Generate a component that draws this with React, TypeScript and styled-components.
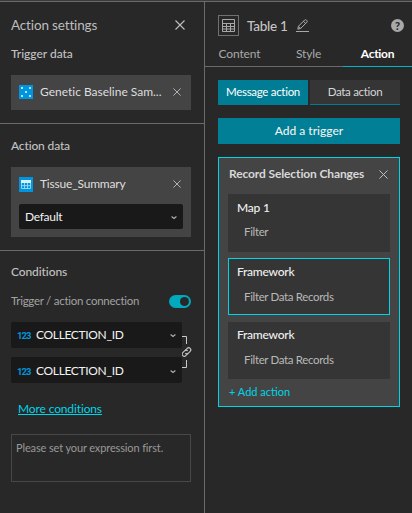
import React from "react";
import styled, { createGlobalStyle, css } from "styled-components";

const Global = createGlobalStyle`
  * { box-sizing: border-box; }
  body { margin: 0; background: #282828; font-family: Lato, "Open Sans", sans-serif; overflow: hidden; }
  svg { display: block; flex: none; }
`;

const Screen = styled.div`
  width: 412px;
  height: 513px;
  display: grid;
  grid-template-columns: 205px 207px;
  background: #282828;
  border-top: 1px solid #3c3c3c;
`;

const Panel = styled.section<{ $divided?: boolean }>`
  border-top: 1px solid #6a6a6a;
  border-right: ${(p) => (p.$divided ? "1px solid #6a6a6a" : "none")};
  min-width: 0;
`;

const Text = styled.span<{ $size?: number; $color?: string; $weight?: number; $track?: number }>`
  font-size: ${(p) => p.$size ?? 12}px;
  line-height: 18px;
  color: ${(p) => p.$color ?? "#dedede"};
  font-weight: ${(p) => p.$weight ?? 400};
  letter-spacing: ${(p) => p.$track ?? 0}px;
  white-space: nowrap;
`;

const Section = styled.div<{ $height: number; $top: number }>`
  height: ${(p) => p.$height}px;
  padding: ${(p) => p.$top}px 13px 0 11px;
  border-bottom: 1px solid #6a6a6a;
  display: flex;
  flex-direction: column;
`;

const LastSection = styled(Section)`
  border-bottom: none;
`;

const Row = styled.div`
  display: flex;
  align-items: center;
  justify-content: space-between;
`;

const TitleRow = styled(Row)`
  height: 18px;
  margin-bottom: 11px;
  padding-right: 6px;
`;

const DataCard = styled.div<{ $height: number }>`
  height: ${(p) => p.$height}px;
  margin-top: 12px;
  padding: 8px 8px 0;
  background: #444;
`;

const DataRow = styled.div`
  display: flex;
  align-items: center;
  height: 18px;
  padding-right: 2px;
  & > span { flex: 1; margin-left: 7px; }
`;

const Select = styled.div<{ $height?: number; $drop?: number }>`
  height: ${(p) => p.$height ?? 26}px;
  background: #191919;
  border-radius: 2px;
  display: flex;
  align-items: center;
  padding: ${(p) => p.$drop ?? 0}px 5px 0 6px;
  & > span:last-of-type { flex: 1; }
`;

const DataSelect = styled(Select)`
  margin-top: 11px;
`;

const NumberTag = styled.span`
  width: 19px;
  font: 700 9.5px Roboto, "Open Sans", sans-serif;
  letter-spacing: -1px;
  color: #0095dd;
`;

const Toggle = styled.div`
  width: 22px;
  height: 13px;
  border-radius: 7px;
  background: #00a9bd;
  display: flex;
  align-items: center;
  justify-content: flex-end;
  padding-right: 2px;
  &::after {
    content: "";
    width: 9px;
    height: 9px;
    border-radius: 50%;
    background: #282828;
  }
`;

const ConnectionRow = styled(Row)`
  margin-top: 11px;
  height: 18px;
`;

const Fields = styled.div`
  display: grid;
  grid-template-columns: 171px 9px;
  margin-top: 12px;
`;

const FieldStack = styled.div`
  display: flex;
  flex-direction: column;
  gap: 9px;
`;

const More = styled.a`
  align-self: flex-start;
  margin: 17px 0 0 7px;
  height: 15px;
  font-size: 12px;
  line-height: 18px;
  letter-spacing: -0.13px;
  color: #00d5e7;
  border-bottom: 1px solid #00d5e7;
`;

const Expression = styled.div`
  margin-top: 19px;
  height: 48px;
  border: 1px solid #484848;
  padding: 2px 4px;
  line-height: 18px;
`;

const WidgetHeader = styled.header`
  height: 42px;
  display: flex;
  align-items: center;
  padding: 5px 8px 0 13px;
`;

const WidgetIcon = styled.div`
  width: 21px;
  height: 21px;
  border: 1px solid #707070;
  display: grid;
  place-items: center;
  margin-right: 8px;
`;

const Edit = styled.div`
  margin-left: 8px;
  width: 13px;
  height: 13px;
  border-bottom: 1px solid #a8a8a8;
`;

const Help = styled.div`
  margin-left: auto;
  width: 13px;
  height: 13px;
  border-radius: 50%;
  background: #a9a9a9;
  color: #282828;
  font-size: 11px;
  font-weight: 900;
  line-height: 13px;
  text-align: center;
`;

const Tabs = styled.nav`
  display: grid;
  grid-template-columns: repeat(3, 1fr);
`;

const Tab = styled.div<{ $active?: boolean }>`
  height: 23px;
  line-height: 20px;
  text-align: center;
  font-size: 12px;
  letter-spacing: ${(p) => (p.$active ? "-0.3px" : "-0.15px")};
  color: ${(p) => (p.$active ? "#fff" : "#a8a8a8")};
  font-weight: ${(p) => (p.$active ? 700 : 400)};
  border-bottom: 1px solid ${(p) => (p.$active ? "#00b4c8" : "#6a6a6a")};
`;

const Body = styled.div`
  padding: 13px 12px 0 13px;
`;

const Switcher = styled.div`
  display: grid;
  grid-template-columns: 1fr 1fr;
  gap: 2px;
`;

const Segment = styled.div<{ $active?: boolean }>`
  height: 25px;
  line-height: 23px;
  text-align: center;
  font-size: 11.5px;
  white-space: nowrap;
  border-bottom: 1px solid #007d94;
  ${(p) =>
    p.$active
      ? css`background: #007d94; color: #fff; letter-spacing: -0.3px;`
      : css`background: #353535; color: #d5d5d5; letter-spacing: -0.3px;`}
`;

const TriggerButton = styled.div`
  margin-top: 13px;
  height: 26px;
  line-height: 26px;
  text-align: center;
  background: #007f96;
  color: #f0f0f0;
  font-size: 12px;
  font-weight: 500;
  letter-spacing: 0;
`;

const TriggerCard = styled.div`
  margin-top: 13px;
  height: 250px;
  border: 1px solid #00d5e7;
  background: #444;
  padding: 7px 9px 0;
`;

const CardHeader = styled(Row)`
  height: 18px;
  padding: 0 2px 0 1px;
  margin-bottom: 11px;
`;

const ActionItem = styled.div<{ $selected?: boolean; $first?: boolean; $top?: number; $gap?: number }>`
  height: ${(p) => (p.$first ? 58 : 57)}px;
  margin-bottom: ${(p) => (p.$first ? 6 : 7)}px;
  background: #353535;
  border: 1px solid ${(p) => (p.$selected ? "#00d5e7" : "#353535")};
  padding: ${(p) => p.$top ?? 4}px 8px 0;
  display: flex;
  flex-direction: column;
  & > span + span { margin: ${(p) => p.$gap ?? 6}px 0 0 7px; }
`;

const AddAction = styled.div`
  margin: -6px 0 0 1px;
`;

const Close = ({ size = 8, color = "#c0c0c0" }: { size?: number; color?: string }) => (
  <svg width={size} height={size} viewBox="0 0 10 10" fill="none" stroke={color} strokeWidth="1.1">
    <path d="M.5.5l9 9M9.5.5l-9 9" />
  </svg>
);

const Chevron = () => (
  <svg width="8" height="6" viewBox="0 0 8 6" fill="none" stroke="#b0b0b0" strokeWidth="1.1">
    <path d="M1.6 2.5L4 4.5l2.4-2" />
  </svg>
);

const PointsIcon = () => (
  <svg width="14" height="14" viewBox="0 0 14 14">
    <path fill="#0096df" d="M0 0h14v14H0z" />
    <path fill="#b9e4f8" d="M2 2h2v2H2zM10 2h2v2h-2zM6 6h2v2H6zM2 10h2v2H2zM10 10h2v2h-2z" />
  </svg>
);

const LayerTableIcon = () => (
  <svg width="14" height="15" viewBox="0 0 14 15">
    <path fill="#0096df" d="M0 0h14v15H0z" />
    <path fill="#d9f1fc" d="M2 3h10v3H2z" />
    <path fill="none" stroke="#b4e0f6" strokeWidth=".8" d="M2.5 6v5.5h9V6M5.5 6v5.5M8.5 6v5.5M2.5 8.7h9" />
  </svg>
);

const TableIcon = () => (
  <svg width="13" height="13" viewBox="0 0 13 13" fill="none" stroke="#a8a8a8">
    <path d="M.5.5h12v12H.5zM0 4.5h13" />
    <path d="M0 7.5h13M0 10h13M4.5 4.5v8M8.5 4.5v8" />
  </svg>
);

const Pencil = () => (
  <svg width="13" height="12" viewBox="0 0 13 12" fill="none" stroke="#b0b0b0" strokeLinejoin="round">
    <path d="M1.8 10.2l.7-3L8.7 1q.8-.7 1.6 0l.6.6q.7.8 0 1.6L4.7 9.4zM7.5 2.3l2.1 2.1M2.6 7.4l2 2" />
  </svg>
);

const LinkMark = () => (
  <svg width="11" height="61" viewBox="0 0 11 61" fill="none" stroke="#c8c8c8">
    <path d="M0 14.5h4.5V22M0 45.5h4.5V38" />
    <g transform="translate(4 30.5) rotate(-45)" strokeWidth="1.1">
      <path d="M.4 2.1h-2.8a2.1 2.1 0 0 1 0-4.2h2.8a2.1 2.1 0 0 1 2 2.1" />
      <path d="M-.4-2.1h2.8a2.1 2.1 0 0 1 0 4.2h-2.8a2.1 2.1 0 0 1-2-2.1" transform="translate(1.4 0)" />
    </g>
  </svg>
);

const FieldSelect = ({ drop }: { drop?: number }) => (
  <Select $drop={drop}>
    <NumberTag>123</NumberTag>
    <Text $size={12} $color="#f2f2f2" $track={-0.33}>COLLECTION_ID</Text>
    <Chevron />
  </Select>
);

export default function App() {
  return (
    <>
      <Global />
      <Screen>
        <Panel $divided>
          <Section $height={122} $top={14}>
            <TitleRow>
              <Text $size={13.5} $color="#bdbdbd" $track={-0.15}>Action settings</Text>
              <Close size={10} />
            </TitleRow>
            <Text $color="#c2c2c2" $weight={500} $track={-0.02}>Trigger data</Text>
            <DataCard $height={35}>
              <DataRow>
                <PointsIcon />
                <Text $size={12} $track={-0.01}>Genetic Baseline Sam...</Text>
                <Close />
              </DataRow>
            </DataCard>
          </Section>
          <Section $height={127} $top={13}>
            <Text $color="#c2c2c2" $weight={500} $track={-0.15}>Action data</Text>
            <DataCard $height={70}>
              <DataRow>
                <LayerTableIcon />
                <Text $size={12} $track={-0.2}>Tissue_Summary</Text>
                <Close />
              </DataRow>
              <DataSelect $height={25}>
                <Text $color="#f2f2f2" $track={-0.3}>Default</Text>
                <Chevron />
              </DataSelect>
            </DataCard>
          </Section>
          <LastSection $height={262} $top={12}>
            <Text $color="#c2c2c2" $weight={500} $track={-0.1}>Conditions</Text>
            <ConnectionRow>
              <Text $size={11.5} $color="#a2a2a2" $track={-0.27}>Trigger / action connection</Text>
              <Toggle />
            </ConnectionRow>
            <Fields>
              <FieldStack>
                <FieldSelect />
                <FieldSelect drop={2} />
              </FieldStack>
              <LinkMark />
            </Fields>
            <More>More conditions</More>
            <Expression>
              <Text $size={11} $color="#999" $track={-0.13}>Please set your expression first.</Text>
            </Expression>
          </LastSection>
        </Panel>
        <Panel>
          <WidgetHeader>
            <WidgetIcon><TableIcon /></WidgetIcon>
            <Text $size={13.5} $weight={500} $color="#c4c4c4" $track={-0.25}>Table 1</Text>
            <Edit><Pencil /></Edit>
            <Help>?</Help>
          </WidgetHeader>
          <Tabs>
            <Tab>Content</Tab>
            <Tab>Style</Tab>
            <Tab $active>Action</Tab>
          </Tabs>
          <Body>
            <Switcher>
              <Segment $active>Message action</Segment>
              <Segment>Data action</Segment>
            </Switcher>
            <TriggerButton>Add a trigger</TriggerButton>
            <TriggerCard>
              <CardHeader>
                <Text $size={12} $weight={700} $color="#d8d8d8" $track={-0.12}>Record Selection Changes</Text>
                <Close size={9} />
              </CardHeader>
              <ActionItem $first>
                <Text $color="#f0f0f0" $weight={500} $track={-0.2}>Map 1</Text>
                <Text $size={11.5} $color="#b8b8b8" $track={-0.35}>Filter</Text>
              </ActionItem>
              <ActionItem $selected $gap={7}>
                <Text $color="#f0f0f0" $weight={500} $track={-0.25}>Framework</Text>
                <Text $size={11.5} $color="#b8b8b8" $track={-0.35}>Filter Data Records</Text>
              </ActionItem>
              <ActionItem $top={3} $gap={7}>
                <Text $color="#f0f0f0" $weight={500} $track={-0.25}>Framework</Text>
                <Text $size={11.5} $color="#b8b8b8" $track={-0.35}>Filter Data Records</Text>
              </ActionItem>
              <AddAction>
                <Text $size={11} $color="#00d5e7">+ Add action</Text>
              </AddAction>
            </TriggerCard>
          </Body>
        </Panel>
      </Screen>
    </>
  );
}
